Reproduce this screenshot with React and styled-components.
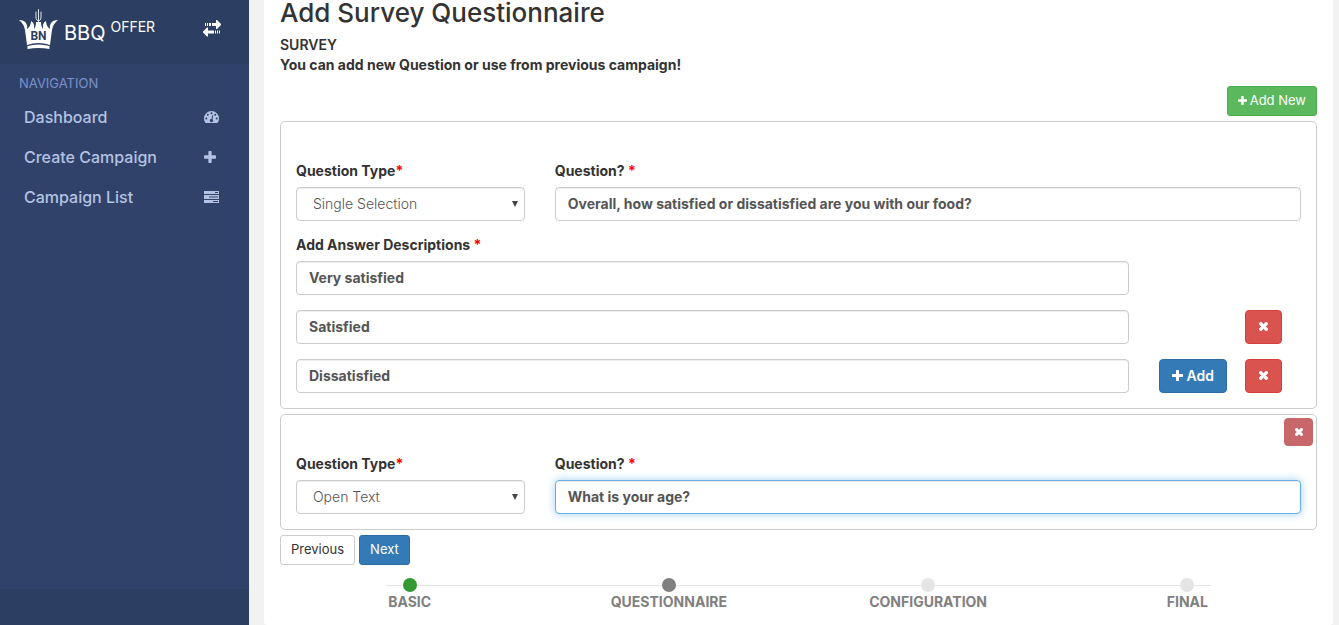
import React, { useEffect, useRef } from "react";
import styled, { createGlobalStyle, css } from "styled-components";

const GlobalStyle = createGlobalStyle`
  *, *::before, *::after { box-sizing: border-box; }
  body {
    margin: 0;
    background: #f2f2f2;
    color: #333;
    font-family: Inter, "Liberation Sans", sans-serif;
    font-size: 14px;
    line-height: 20px;
  }
  button, input, select { font-family: inherit; }
`;

const Layout = styled.div`
  display: flex;
  min-height: 100vh;
`;

/* Sidebar */
const Sidebar = styled.aside`
  display: flex;
  flex-direction: column;
  flex: 0 0 249px;
  background: #304269;
`;
const Brand = styled.header`
  display: flex;
  align-items: center;
  height: 64px;
  padding: 0 28px 6px 19px;
  background: #2c3e61;
  color: #fff;
`;
const BrandLink = styled.a`
  display: flex;
  flex: 1;
  align-items: center;
  gap: 6px;
  color: inherit;
  text-decoration: none;
`;
const BrandName = styled.span`
  display: flex;
  gap: 5px;
  padding-top: 8px;
  font-size: 20px;
  line-height: 26px;
`;
const BrandTag = styled.span`
  font-size: 14px;
  line-height: 14px;
`;
const PlainButton = styled.button`
  display: flex;
  padding: 0;
  border: 0;
  background: none;
  color: inherit;
  cursor: pointer;
`;
const NavTitle = styled.h2`
  margin: 0;
  padding: 9px 19px 4px;
  color: #7a91cb;
  font-size: 13px;
  font-weight: 400;
  line-height: 20px;
`;
const NavList = styled.ul`
  flex: 1;
  margin: 0;
  padding: 0;
  list-style: none;
`;
const NavLink = styled.a`
  display: flex;
  align-items: center;
  justify-content: space-between;
  height: 40px;
  padding: 0 29px 0 24px;
  color: #b4c2e3;
  font-size: 16px;
  font-weight: 500;
  text-decoration: none;
`;
const NavIcon = styled.span`
  display: flex;
  width: 16px;
`;
const SidebarFooter = styled.footer`
  height: 36px;
  background: #2c3e61;
`;

/* Content */
const Main = styled.main`
  flex: 1;
  min-width: 0;
  margin: 0 6px 0 15px;
  padding: 0 16px 12px;
  border-radius: 0 0 4px 4px;
  background: #fff;
`;
const Title = styled.h1`
  margin: 0 0 9px;
  font-size: 26px;
  font-weight: 500;
  line-height: 26px;
`;
const Intro = styled.p`
  margin: 0;
  font-weight: ${(p) => (p.$strong ? 700 : 600)};
`;
const Toolbar = styled.div`
  display: flex;
  justify-content: ${(p) => (p.$end ? "flex-end" : "flex-start")};
  gap: 4px;
  padding: ${(p) => (p.$end ? "11px 0 5px" : "0 0 13px")};
`;

const tones = {
  success: css`background: #5cb85c; border-color: #4cae4c; color: #fff;`,
  primary: css`background: #337ab7; border-color: #2e6da4; color: #fff;`,
  danger: css`background: #d9534f; border-color: #d43f3a; color: #fff;`,
  muted: css`background: #c7676a; border-color: #c7676a; color: #fff;`,
  plain: css`background: #fff; border-color: #ccc; color: #333;`,
};
const Button = styled.button`
  display: inline-flex;
  align-items: center;
  justify-content: center;
  gap: ${(p) => (p.$small ? 3 : 4)}px;
  height: ${(p) => (p.$small ? 30 : 34)}px;
  padding: 0 ${(p) => (p.$small ? 10 : 12)}px 2px;
  border: 1px solid;
  border-radius: ${(p) => (p.$small ? 3 : 4)}px;
  font-size: ${(p) => (p.$small ? 13 : 14)}px;
  font-weight: ${(p) => (p.$small ? 400 : 600)};
  white-space: nowrap;
  cursor: pointer;
  ${(p) => tones[p.$tone]}
`;
const RemoveAnswer = styled(Button)`
  width: 37px;
`;
const RemoveCard = styled(Button)`
  width: 29px;
  height: 28px;
  padding: 0;
  border-radius: 4px;
`;

const Card = styled.section`
  margin-bottom: 5px;
  border: 1px solid #ccc;
  border-radius: 5px;
`;
const CardTop = styled.div`
  display: flex;
  justify-content: flex-end;
  height: 40px;
  padding: 3px;
`;
const Row = styled.div`
  display: grid;
  grid-template-columns: ${(p) => p.$columns};
  margin-bottom: 15px;
`;
const Cell = styled.div`
  min-width: 0;
  padding: 0 0 0 15px;
  padding-right: ${(p) => (p.$tight ? 0 : 15)}px;
`;
const Label = styled.label`
  display: block;
  margin-bottom: 7px;
  font-weight: 700;
  line-height: 18px;
`;
const Required = styled.span`
  color: #f00;
`;
const field = css`
  display: block;
  width: 100%;
  height: 34px;
  border: 1px solid #ccc;
  border-radius: 4px;
  background: #fff;
  box-shadow: inset 0 1px 1px rgba(0, 0, 0, 0.075);
  color: #555;
  font-size: 14px;
  &:focus {
    outline: 0;
    border-color: #66afe9;
    box-shadow: inset 0 1px 1px rgba(0, 0, 0, 0.075), 0 0 8px rgba(102, 175, 233, 0.6);
  }
`;
const TextField = styled.input`
  ${field}
  padding: 0 12px 2px;
  font-weight: 700;
`;
const SelectBox = styled.div`
  position: relative;
  svg {
    position: absolute;
    top: 14px;
    right: 7px;
    pointer-events: none;
  }
`;
const SelectField = styled.select`
  ${field}
  appearance: none;
  padding: 0 16px 2px;
  font-weight: 300;
`;

/* Progress */
const Steps = styled.ol`
  display: grid;
  grid-template-columns: repeat(4, 1fr);
  margin: 0;
  padding: 0;
  list-style: none;
  background: linear-gradient(#e5e5e5, #e5e5e5) center 7px / calc(100% - 212px) 1px no-repeat;
`;
const Step = styled.li`
  display: flex;
  flex-direction: column;
  align-items: center;
  color: #808080;
  font-weight: 700;
  &::before {
    content: "";
    width: 14px;
    height: 14px;
    border-radius: 50%;
    background: ${(p) => p.$dot};
  }
`;

const PLUS =
  "M1600 736v192q0 40-28 68t-68 28h-416v416q0 40-28 68t-68 28h-192q-40 0-68-28t-28-68v-416h-416q-40 0-68-28t-28-68v-192q0-40 28-68t68-28h416v-416q0-40 28-68t68-28h192q40 0 68 28t28 68v416h416q40 0 68 28t28 68z";
const TIMES =
  "M1490 1322q0 40-28 68l-136 136q-28 28-68 28t-68-28l-294-294-294 294q-28 28-68 28t-68-28l-136-136q-28-28-28-68t28-68l294-294-294-294q-28-28-28-68t28-68l136-136q28-28 68-28t68 28l294 294 294-294q28-28 68-28t68 28l136 136q28 28 28 68t-28 68l-294 294 294 294q28 28 28 68z";

function Plus({ size = 14 }) {
  return (
    <svg width={size} height={size} viewBox="192 128 1408 1408" fill="currentColor" aria-hidden="true">
      <path d={PLUS} />
    </svg>
  );
}
function Times({ size = 9 }) {
  return (
    <svg width={size} height={size} viewBox="302 366 1188 1188" fill="currentColor" aria-hidden="true">
      <path d={TIMES} stroke="currentColor" strokeWidth="90" />
    </svg>
  );
}
function Gauge() {
  return (
    <svg width="15" height="12" viewBox="0 0 15 12" aria-hidden="true">
      <path fill="currentColor" d="M7.5 0A7.5 7.5 0 0 0 0 7.5c0 1.500.4 2.900 1.200 4 .2.3.5.5.8.5h11c.3 0 .6-.2.8-.5.8-1.100 1.200-2.500 1.200-4A7.500 7.500 0 0 0 7.500 0z" />
      <g fill="#304269">
        <circle cx="2.300" cy="7.500" r="1" />
        <circle cx="3.800" cy="3.800" r="1" />
        <circle cx="7.500" cy="2.200" r="1" />
        <circle cx="11.200" cy="3.800" r="1" />
        <circle cx="12.700" cy="7.500" r="1" />
        <path d="M8.300 4.300l1 .3-.9 3.600a1.600 1.600 0 1 1-1-.3z" />
      </g>
    </svg>
  );
}
function Tasks() {
  return (
    <svg width="15" height="12" viewBox="0 0 15 12" aria-hidden="true">
      <path fill="currentColor" d="M0 0h15v3H0zM0 4h15v4H0zM0 9h15v3H0z" />
      <path fill="#304269" d="M11 1h3v1h-3zM5 5.500h9v1H5zM9 10h5v1H9z" />
    </svg>
  );
}
function Swap() {
  return (
    <svg width="18" height="18" viewBox="0 0 18 18" fill="currentColor" aria-hidden="true">
      <path d="M2 3h1v3H2zM4 3h1v3H4zM6 3h2v3H6zM9 3h4V0h1l4 4v1l-4 4h-1V6H9z" />
      <path d="M17 10.500h-1v3h1zM15 10.500h-1v3h1zM13 10.500h-1v3h1zM11 10.500H5v-3H4l-4 4v1l4 4h1v-3h6z" />
    </svg>
  );
}
function Crown() {
  return (
    <svg width="39" height="40" viewBox="0 0 39 40" aria-hidden="true">
      <g fill="none" stroke="#dfe5f0" strokeLinecap="round">
        <path d="M17 3v6q0 2 2.500 3Q22 11 22 9V3" />
        <path d="M19.500 0.500v12" />
      </g>
      <path
        fill="#fff"
        d="M0 11Q5 11 7 14Q9 17 8 20Q12 17 12 12Q16 14 15 20Q17 18 17 13H22Q22 18 24 20Q23 14 27 12Q27 17 31 20Q30 17 32 14Q34 11 39 11Q34 15 33 21L31 36Q19.500 32 8 36L6 21Q5 15 0 11Z"
      />
      <path fill="#fff" d="M8.500 37Q19.500 34 30.500 37V40Q19.500 38 8.500 40Z" />
      <text
        x="19.500"
        y="31"
        textAnchor="middle"
        fill="#2c3e61"
        fontFamily="'Liberation Sans Narrow', Roboto, sans-serif"
        fontSize="12"
        fontWeight="700"
      >
        BN
      </text>
    </svg>
  );
}

function TypeSelect({ id, value }) {
  return (
    <Cell>
      <Label htmlFor={id}>
        Question Type<Required>*</Required>
      </Label>
      <SelectBox>
        <SelectField id={id} defaultValue={value}>
          <option>Single Selection</option>
          <option>Open Text</option>
        </SelectField>
        <svg width="6" height="6" viewBox="0 0 6 6" aria-hidden="true">
          <path d="M0 0h6L3 6z" fill="#444" />
        </svg>
      </SelectBox>
    </Cell>
  );
}

function QuestionField({ id, value, active }) {
  const input = useRef(null);
  useEffect(() => {
    if (active) {
      input.current.focus();
      input.current.setSelectionRange(value.length, value.length);
    }
  }, [active, value]);
  return (
    <Cell>
      <Label htmlFor={id}>
        Question? <Required>*</Required>
      </Label>
      <TextField id={id} ref={input} defaultValue={value} />
    </Cell>
  );
}

function Answer({ id, value, canAdd, canRemove }) {
  return (
    <Row $columns="10fr 1fr 1fr">
      <Cell>
        <TextField id={id} aria-label={value} defaultValue={value} />
      </Cell>
      <Cell $tight>
        {canAdd && (
          <Button type="button" $tone="primary">
            <Plus size={11} />
            Add
          </Button>
        )}
      </Cell>
      <Cell $tight>
        {canRemove && (
          <RemoveAnswer type="button" $tone="danger" aria-label="Remove answer">
            <Times size={9} />
          </RemoveAnswer>
        )}
      </Cell>
    </Row>
  );
}

const navItems = [
  { text: "Dashboard", icon: <Gauge /> },
  { text: "Create Campaign", icon: <Plus size={12} /> },
  { text: "Campaign List", icon: <Tasks /> },
];
const steps = [
  { text: "BASIC", dot: "#339933" },
  { text: "QUESTIONNAIRE", dot: "#808080" },
  { text: "CONFIGURATION", dot: "#e5e5e5" },
  { text: "FINAL", dot: "#e5e5e5" },
];

export default function App() {
  return (
    <>
      <GlobalStyle />
      <Layout>
        <Sidebar>
          <Brand>
            <BrandLink href="#">
              <Crown />
              <BrandName>
                BBQ <BrandTag>OFFER</BrandTag>
              </BrandName>
            </BrandLink>
            <PlainButton type="button" aria-label="Toggle menu">
              <Swap />
            </PlainButton>
          </Brand>
          <NavTitle>NAVIGATION</NavTitle>
          <NavList>
            {navItems.map((item) => (
              <li key={item.text}>
                <NavLink href="#">
                  {item.text}
                  <NavIcon>{item.icon}</NavIcon>
                </NavLink>
              </li>
            ))}
          </NavList>
          <SidebarFooter />
        </Sidebar>
        <Main>
          <Title>Add Survey Questionnaire</Title>
          <Intro>SURVEY</Intro>
          <Intro $strong>You can add new Question or use from previous campaign!</Intro>
          <Toolbar $end>
            <Button type="button" $small $tone="success">
              <Plus size={9} />
              Add New
            </Button>
          </Toolbar>
          <Card>
            <CardTop />
            <Row $columns="1fr 3fr">
              <TypeSelect id="type-1" value="Single Selection" />
              <QuestionField id="question-1" value="Overall, how satisfied or dissatisfied are you with our food?" />
            </Row>
            <Cell>
              <Label htmlFor="answer-1">
                Add Answer Descriptions <Required>*</Required>
              </Label>
            </Cell>
            <Answer id="answer-1" value="Very satisfied" />
            <Answer id="answer-2" value="Satisfied" canRemove />
            <Answer id="answer-3" value="Dissatisfied" canAdd canRemove />
          </Card>
          <Card>
            <CardTop>
              <RemoveCard type="button" $tone="muted" aria-label="Remove question">
                <Times size={8} />
              </RemoveCard>
            </CardTop>
            <Row $columns="1fr 3fr">
              <TypeSelect id="type-2" value="Open Text" />
              <QuestionField id="question-2" value="What is your age?" active />
            </Row>
          </Card>
          <Toolbar>
            <Button type="button" $small $tone="plain">Previous</Button>
            <Button type="button" $small $tone="primary">Next</Button>
          </Toolbar>
          <Steps>
            {steps.map((step) => (
              <Step key={step.text} $dot={step.dot}>
                {step.text}
              </Step>
            ))}
          </Steps>
        </Main>
      </Layout>
    </>
  );
}
